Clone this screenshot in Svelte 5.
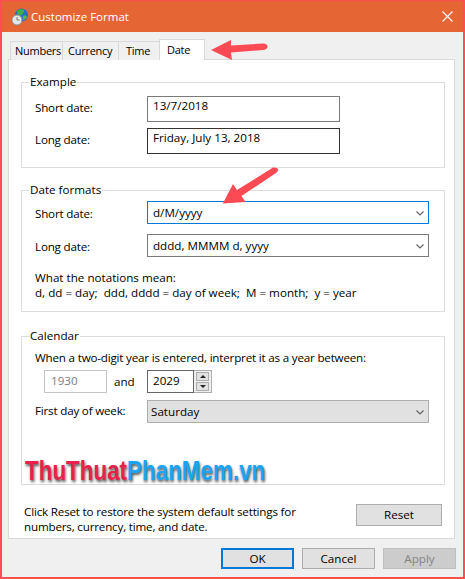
<script>
  const tabs = ['Numbers', 'Currency', 'Time', 'Date'];
  let activeTab = 'Date';
</script>

<div class="window">
  <header class="titlebar">
    <svg class="app-icon" width="20" height="20" viewBox="0 0 20 20">
      <circle cx="11.5" cy="8" r="6.5" fill="#1f6fc4" />
      <path d="M7 4c2-2 5-3 7-1 1 2-1 3-2 5-2 1-4 0-5-1z" fill="#3fae49" />
      <path d="M13 9c2-1 4 0 4 1-1 2-3 3-4 3z" fill="#58b947" />
      <circle cx="7" cy="13" r="5" fill="#e4e6e8" stroke="#8f9499" />
      <path d="M7 10v3h2.5" fill="none" stroke="#777" />
    </svg>
    <span class="title">Customize Format</span>
    <svg class="close" width="11" height="11" viewBox="0 0 11 11">
      <path d="M.5.5l10 10M10.5.5l-10 10" stroke="#fff" stroke-width="1.1" />
    </svg>
  </header>

  <div class="body">
    <div class="tabs">
      {#each tabs as tab}
        <div class="tab" class:active={tab === activeTab}>{tab}</div>
      {/each}
    </div>

    <div class="panel">
      <fieldset class="group example">
        <legend>Example</legend>
        <div class="row">
          <span class="label">Short date:</span>
          <div class="input sample grey">13/7/2018</div>
        </div>
        <div class="row">
          <span class="label">Long date:</span>
          <div class="input sample dark">Friday, July 13, 2018</div>
        </div>
      </fieldset>

      <fieldset class="group formats">
        <legend>Date formats</legend>
        <div class="row">
          <span class="label">Short date:</span>
          <div class="input combo focused">
            d/M/yyyy
            <svg class="chev" width="8" height="5" viewBox="0 0 8 5"><path d="M.5.5L4 4 7.500.5" /></svg>
          </div>
        </div>
        <div class="row">
          <span class="label">Long date:</span>
          <div class="input combo grey">
            dddd, MMMM d, yyyy
            <svg class="chev" width="8" height="5" viewBox="0 0 8 5"><path d="M.5.5L4 4 7.500.5" /></svg>
          </div>
        </div>
        <p class="notes">What the notations mean:<br />d, dd = day;&nbsp; ddd, dddd = day of week;&nbsp; M = month;&nbsp; y = year</p>
      </fieldset>

      <fieldset class="group calendar">
        <legend>Calendar</legend>
        <p class="intro">When a two-digit year is entered, interpret it as a year between:</p>
        <div class="years">
          <div class="input disabled">1930</div>
          <span class="and">and</span>
          <div class="input year">2029</div>
          <div class="spin">
            <span class="spin-btn"><i class="up"></i></span>
            <span class="spin-btn"><i class="down"></i></span>
          </div>
        </div>
        <div class="row">
          <span class="label">First day of week:</span>
          <div class="select">
            Saturday
            <svg class="chev" width="8" height="5" viewBox="0 0 8 5"><path d="M.5.5L4 4 7.500.5" /></svg>
          </div>
        </div>
      </fieldset>

      <div class="reset-row">
        <p>Click Reset to restore the system default settings for<br />numbers, currency, time, and date.</p>
        <button class="btn reset">Reset</button>
      </div>
    </div>

    <div class="actions">
      <button class="btn default">OK</button>
      <button class="btn">Cancel</button>
      <button class="btn off">Apply</button>
    </div>
  </div>

  <div class="watermark"><span class="red">ThuThuat</span><span class="blue">PhanMem.vn</span></div>

  <svg class="arrows" width="465" height="579" viewBox="0 0 465 579">
    <path d="M211 50L231 40 231 45.500 263 43.500Q268 44 267.500 47 267 49.500 263 50L231 52.500 232 60z" fill="#fc4a55" />
    <path d="M222.800 203.500L233 184 237 190 273 167.500Q277 167 278 169 278.500 171 276 173L241.500 196 245.500 202z" fill="#fc4a55" />
  </svg>
</div>

<style>
  :global(body) {
    margin: 0;
    background: #fff;
  }

  .window {
    position: relative;
    box-sizing: border-box;
    width: 465px;
    height: 579px;
    display: flex;
    flex-direction: column;
    background: #f0f0f0;
    border: 2px solid #fc5050;
    border-top-width: 1px;
    font: 11.65px/16px "Open Sans", sans-serif;
    color: #000;
    overflow: hidden;
  }

  .titlebar {
    flex: none;
    height: 31px;
    display: flex;
    align-items: center;
    padding: 0 10px 0 8px;
    background: #e66535;
    color: #fff;
  }

  .app-icon {
    margin-right: 1px;
  }

  .title {
    flex: 1;
    font-size: 11.5px;
  }

  .body {
    flex: 1;
    display: flex;
    flex-direction: column;
    padding: 7px 6px 0;
  }

  .tabs {
    display: flex;
    align-items: flex-end;
    height: 21px;
    padding-left: 2px;
    margin-bottom: -1px;
    position: relative;
  }

  .tab {
    box-sizing: border-box;
    height: 19px;
    width: 56px;
    padding: 0 0 0 5px;
    font-size: 11px;
    letter-spacing: -0.25px;
    line-height: 18px;
    background: #f0f0f0;
    border: 1px solid #d9d9d9;
    border-bottom: 0;
    border-left-width: 0;
  }

  .tab:first-child {
    width: 53px;
    border-left-width: 1px;
    padding-left: 4px;
  }

  .tab:nth-child(3) {
    width: 41px;
    padding-left: 7px;
  }

  .tab.active {
    height: 21px;
    width: 46px;
    padding: 0 0 0 7px;
    background: #fff;
    line-height: 19px;
    margin-left: -1px;
    border-left-width: 1px;
    position: relative;
    z-index: 1;
  }

  .panel {
    box-sizing: border-box;
    width: 447px;
    height: 480px;
    display: flex;
    flex-direction: column;
    padding: 0 10px 0 12px;
    background: #fff;
    border: 1px solid #d9d9d9;
  }

  .group {
    box-sizing: border-box;
    margin: 0;
    width: 424px;
    padding: 0 0 0 13px;
    border: 1px solid #dcdcdc;
    min-width: 0;
  }

  .group legend {
    margin-left: -6px;
    padding: 0 1px;
    line-height: 14px;
  }

  .example {
    height: 93px;
    margin-top: 15px;
    padding-top: 7px;
  }

  .formats {
    height: 129px;
    margin-top: 15px;
    padding-top: 4px;
  }

  .calendar {
    height: 156px;
    margin-top: 17px;
  }

  .row {
    display: flex;
    align-items: center;
    margin-bottom: 6px;
  }

  .label {
    flex: none;
    width: 112px;
    padding-bottom: 2px;
    letter-spacing: -0.2px;
  }

  .input {
    box-sizing: border-box;
    position: relative;
    display: flex;
    align-items: center;
    height: 26px;
    padding: 0 0 6px 5px;
    background: #fff;
    border: 1px solid #7a7a7a;
  }

  .sample {
    width: 193px;
  }

  .grey {
    border-color: #7a7a7a;
  }

  .dark {
    border-color: #333;
  }

  .combo {
    width: 282px;
    height: 23px;
    padding: 0 0 0 5px;
  }

  .focused {
    border-color: #0078d7;
  }

  .formats .label {
    padding: 2px 0 0;
  }

  .formats .row + .row {
    margin-top: 10px;
    margin-bottom: 0;
  }

  .chev {
    position: absolute;
    right: 4px;
    top: 9px;
    fill: none;
    stroke: #606060;
    stroke-width: 1.1;
  }

  .notes {
    margin: 13px 0 0;
    line-height: 15px;
  }

  .intro {
    margin: 0;
    line-height: 17px;
    padding-top: 6px;
    letter-spacing: -0.2px;
  }

  .years {
    display: flex;
    align-items: center;
    margin: 4px 0 7px 9px;
  }

  .disabled {
    width: 63px;
    height: 23px;
    padding: 0 0 2px 6px;
    color: #7d7d7d;
    border-color: #c4c4c4;
  }

  .and {
    width: 40px;
    padding-left: 7px;
    box-sizing: border-box;
  }

  .year {
    width: 47px;
    height: 23px;
    padding: 0 0 2px 5px;
    border-color: #666;
  }

  .spin {
    box-sizing: border-box;
    width: 18px;
    height: 23px;
    display: flex;
    flex-direction: column;
    justify-content: center;
    gap: 1px;
    padding: 1px 2px;
    background: #f0f0f0;
    border: 1px solid #adadad;
    border-left: 0;
  }

  .spin-btn {
    flex: 1;
    display: flex;
    align-items: center;
    justify-content: center;
    background: #e1e1e1;
    border: 1px solid #adadad;
  }

  .spin i {
    width: 0;
    height: 0;
    border: 3px solid transparent;
  }

  .up {
    border-bottom-color: #222 !important;
    border-top-width: 0 !important;
  }

  .down {
    border-top-color: #222 !important;
    border-bottom-width: 0 !important;
  }

  .select {
    box-sizing: border-box;
    position: relative;
    display: flex;
    align-items: center;
    width: 282px;
    height: 23px;
    padding-left: 3px;
    background: #e1e1e1;
    border: 1px solid #adadad;
  }

  .reset-row {
    display: flex;
    justify-content: space-between;
    align-items: flex-start;
    margin-top: 19px;
    padding: 0 2px 0 3px;
  }

  .reset-row p {
    margin: 0;
    line-height: 15px;
    letter-spacing: -0.19px;
  }

  .btn {
    box-sizing: border-box;
    width: 73px;
    height: 21px;
    padding: 0;
    font: inherit;
    color: inherit;
    background: #e1e1e1;
    border: 1px solid #adadad;
  }

  .reset {
    width: 86px;
    height: 22px;
  }

  .default {
    border: 2px solid #0078d7;
  }

  .off {
    color: #838383;
    background: #ccc;
    border-color: #bfbfbf;
  }

  .actions {
    display: flex;
    justify-content: flex-end;
    gap: 8px;
    margin-top: 9px;
    padding-right: 1px;
  }

  .watermark {
    position: absolute;
    left: 23px;
    top: 453px;
    font: bold 27px/34px "Liberation Sans", sans-serif;
    transform: scaleX(0.83);
    transform-origin: left center;
    text-shadow: 1px 2px 3px #555;
  }

  .red {
    color: #e8214a;
  }

  .blue {
    color: #19a4f5;
  }

  .arrows {
    position: absolute;
    left: -2px;
    top: -1px;
    pointer-events: none;
  }
</style>
